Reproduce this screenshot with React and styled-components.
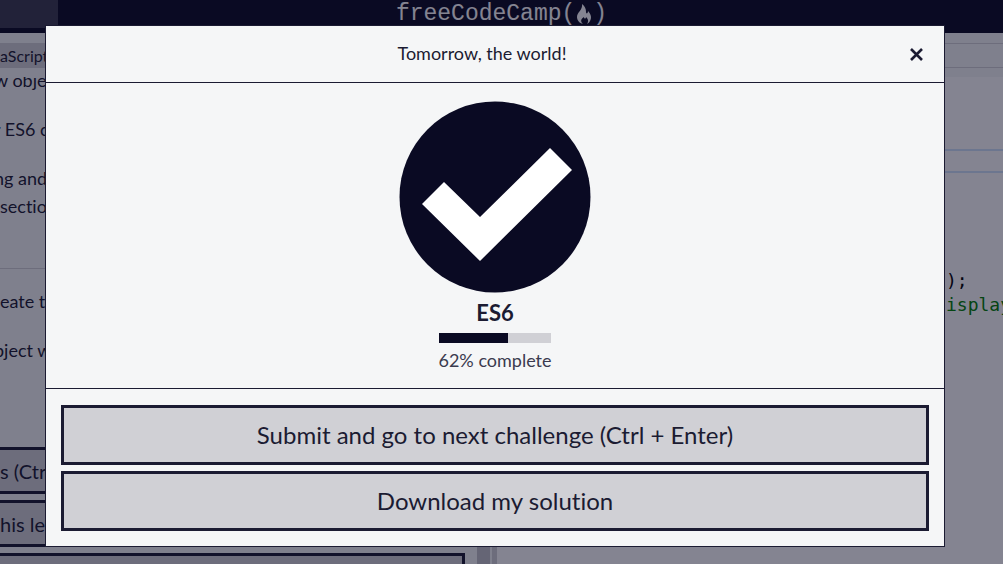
import React from "react";
import styled, { createGlobalStyle } from "styled-components";

const c = {
  ink: "#0a0a23",
  dark: "#1b1b32",
  slate: "#3b3b4f",
  grey: "#d0d0d5",
  panel: "#f5f6f7",
};

const GlobalStyle = createGlobalStyle`
  *, *::before, *::after { box-sizing: border-box; }
  body {
    margin: 0;
    overflow: hidden;
    background: ${c.panel};
    color: ${c.dark};
    font-family: Lato, "Liberation Sans", sans-serif;
    font-size: 18px;
    font-variant-ligatures: none;
    line-height: 28px;
  }
  h1, h2, p { margin: 0; font: inherit; }
  button { font-variant-ligatures: none; }
`;

const Page = styled.div`
  display: flex;
  flex-direction: column;
  height: 100vh;
  overflow: hidden;
`;

const TopBar = styled.header`
  display: grid;
  grid-template-columns: 1fr auto 1fr;
  align-items: start;
  flex: none;
  height: 33px;
  background: ${c.ink};
`;

const SearchSlot = styled.div`
  width: 58px;
  height: 28px;
  background: ${c.slate};
`;

const Logo = styled.a`
  display: flex;
  align-items: center;
  height: 28px;
  color: #fff;
  font-family: "Liberation Mono", monospace;
  font-size: 23px;
  line-height: 24px;
  text-decoration: none;
`;

const Flame = styled.svg`
  width: 18px;
  height: 20px;
`;

const TabStrip = styled.div`
  display: flex;
  flex: none;
  height: 44px;
  padding: 10px 0 9px;
`;

const LessonTab = styled.button`
  width: 120px;
  padding: 0;
  border: 0;
  background: ${c.grey};
  color: ${c.dark};
  font: inherit;
  font-size: 16px;
  line-height: 24px;
  text-align: left;
`;

const TabRule = styled.div`
  flex: 1;
  border: solid ${c.grey};
  border-width: 1px 0;
`;

const Workspace = styled.main`
  display: flex;
  flex: 1;
  min-height: 0;
`;

const Lesson = styled.section`
  flex: 0 0 477px;
  padding-right: 12px;
  overflow: hidden;
  white-space: nowrap;
`;

const Paragraph = styled.p`
  height: 28px;
  margin-bottom: ${(p) => (p.$tight ? 0 : 21)}px;
  text-indent: ${(p) => (p.$cut ? -6 : 0)}px;
`;

const LessonText = styled.div`
  height: 203px;
  margin-top: -11px;
  border-bottom: 1px solid ${c.grey};
`;

const Steps = styled.div`
  height: 178px;
  padding-top: 18px;
`;

const LessonButton = styled.button`
  display: block;
  width: 100%;
  height: 47px;
  margin-bottom: 6px;
  padding: 0;
  border: 3px solid ${c.dark};
  border-left: 0;
  background: ${c.grey};
  color: ${c.dark};
  font: inherit;
  font-size: 20px;
  text-align: left;
`;

const Splitter = styled.div`
  flex: 0 0 20px;
  border: solid ${c.grey};
  border-width: 0 5px 0 0;
  background: linear-gradient(to right, #c0c0c6 13px, ${c.panel} 13px);
`;

const Editor = styled.section`
  flex: 1;
  padding-top: 72px;
  background: #fff;
  overflow: hidden;
`;

const ActiveLine = styled.div`
  height: 24px;
  border: solid #cfe3fa;
  border-width: 2px 0;
`;

const Code = styled.pre`
  margin: 96px 0 0;
  padding-left: 449px;
  color: #000;
  font-family: "DejaVu Sans Mono", monospace;
  font-size: 18px;
  line-height: 24px;
`;

const Comment = styled.span`
  color: #008000;
`;

const Backdrop = styled.div`
  position: fixed;
  inset: 0;
  display: flex;
  justify-content: center;
  align-items: flex-start;
  padding: 25px 13px 0 0;
  background: rgba(10, 10, 35, 0.5);
`;

const Dialog = styled.div`
  width: 900px;
  max-width: 100%;
  border: 1px solid ${c.dark};
  background: ${c.panel};
`;

const DialogHeader = styled.div`
  display: flex;
  align-items: center;
  height: 57px;
  padding: 0 15px 2px;
  border-bottom: 1px solid ${c.dark};
`;

const Title = styled.h1`
  flex: 1;
  text-align: center;
`;

const CloseButton = styled.button`
  display: grid;
  place-items: center;
  width: 26px;
  height: 26px;
  padding: 2px 0 0;
  border: 0;
  background: none;
  color: ${c.dark};
`;

const Body = styled.div`
  display: flex;
  flex-direction: column;
  align-items: center;
  padding: 18px 15px 14px;
`;

const Check = styled.svg`
  display: block;
  width: 192px;
  height: 192px;
`;

const BlockName = styled.h2`
  margin-top: 4px;
  font-size: 22px;
  font-weight: 700;
  line-height: 32px;
`;

const Progress = styled.div`
  width: 112px;
  height: 10px;
  margin-top: 4px;
  background: ${c.grey};
`;

const Bar = styled.div`
  height: 100%;
  background: ${c.ink};
`;

const Percent = styled.p`
  margin-top: 3px;
  color: ${c.slate};
`;

const Footer = styled.div`
  display: grid;
  gap: 6px;
  padding: 16px 15px 15px;
  border-top: 1px solid ${c.dark};
`;

const Action = styled.button`
  height: 60px;
  padding: 0;
  border: 3px solid ${c.dark};
  background: ${c.grey};
  color: ${c.dark};
  font: inherit;
  font-size: 24px;
  line-height: 32px;
`;

const percent = 62;

export default function App() {
  return (
    <>
      <GlobalStyle />
      <Page>
        <TopBar>
          <SearchSlot />
          <Logo href="#">
            freeCodeCamp(
            <Flame viewBox="0 0 18 20" aria-hidden="true">
              <path
                d="M7 0C10 2 11 5 11 8c0 2 2 2 2-1 3 3 4 7 2 10-1 2-2 2-3 3 2-3 1-5-1-7 0 2-2 2-2 0-3 2-4 4-1 7-4-1-6-4-6-7 0-5 6-7 5-13z"
                fill="currentColor"
              />
            </Flame>
            )
          </Logo>
        </TopBar>
        <TabStrip>
          <LessonTab>aScript</LessonTab>
          <TabRule />
        </TabStrip>
        <Workspace>
          <Lesson>
            <LessonText>
              <Paragraph $cut>w object</Paragraph>
              <Paragraph $cut>r ES6 co</Paragraph>
              <Paragraph $cut $tight>ng and</Paragraph>
              <Paragraph>section</Paragraph>
            </LessonText>
            <Steps>
              <Paragraph>eate th</Paragraph>
              <Paragraph $cut>bject wi</Paragraph>
            </Steps>
            <LessonButton>s (Ctrl</LessonButton>
            <LessonButton>his less</LessonButton>
            <LessonButton aria-label="Ask for help" />
          </Lesson>
          <Splitter />
          <Editor>
            <ActiveLine />
            <Code>
              {");\n"}
              <Comment>isplay</Comment>
            </Code>
          </Editor>
        </Workspace>
      </Page>
      <Backdrop>
        <Dialog role="dialog" aria-modal="true" aria-labelledby="dialog-title">
          <DialogHeader>
            <Title id="dialog-title">Tomorrow, the world!</Title>
            <CloseButton aria-label="Close">
              <svg width="14" height="14" viewBox="0 0 14 14" aria-hidden="true">
                <path d="M2 2L13 13M13 2L2 13" stroke="currentColor" strokeWidth="2.6" />
              </svg>
            </CloseButton>
          </DialogHeader>
          <Body>
            <Check viewBox="0 0 192 192" aria-hidden="true">
              <circle cx="96" cy="96" r="95.5" fill={c.ink} />
              <path d="M23 103L45 81L81 116L151 47L173 69L81 160Z" fill="#fff" />
            </Check>
            <BlockName>ES6</BlockName>
            <Progress
              role="progressbar"
              aria-label="ES6"
              aria-valuemin={0}
              aria-valuemax={100}
              aria-valuenow={percent}
            >
              <Bar style={{ width: `${percent}%` }} />
            </Progress>
            <Percent>{percent}% complete</Percent>
          </Body>
          <Footer>
            <Action>Submit and go to next challenge (Ctrl + Enter)</Action>
            <Action>Download my solution</Action>
          </Footer>
        </Dialog>
      </Backdrop>
    </>
  );
}
